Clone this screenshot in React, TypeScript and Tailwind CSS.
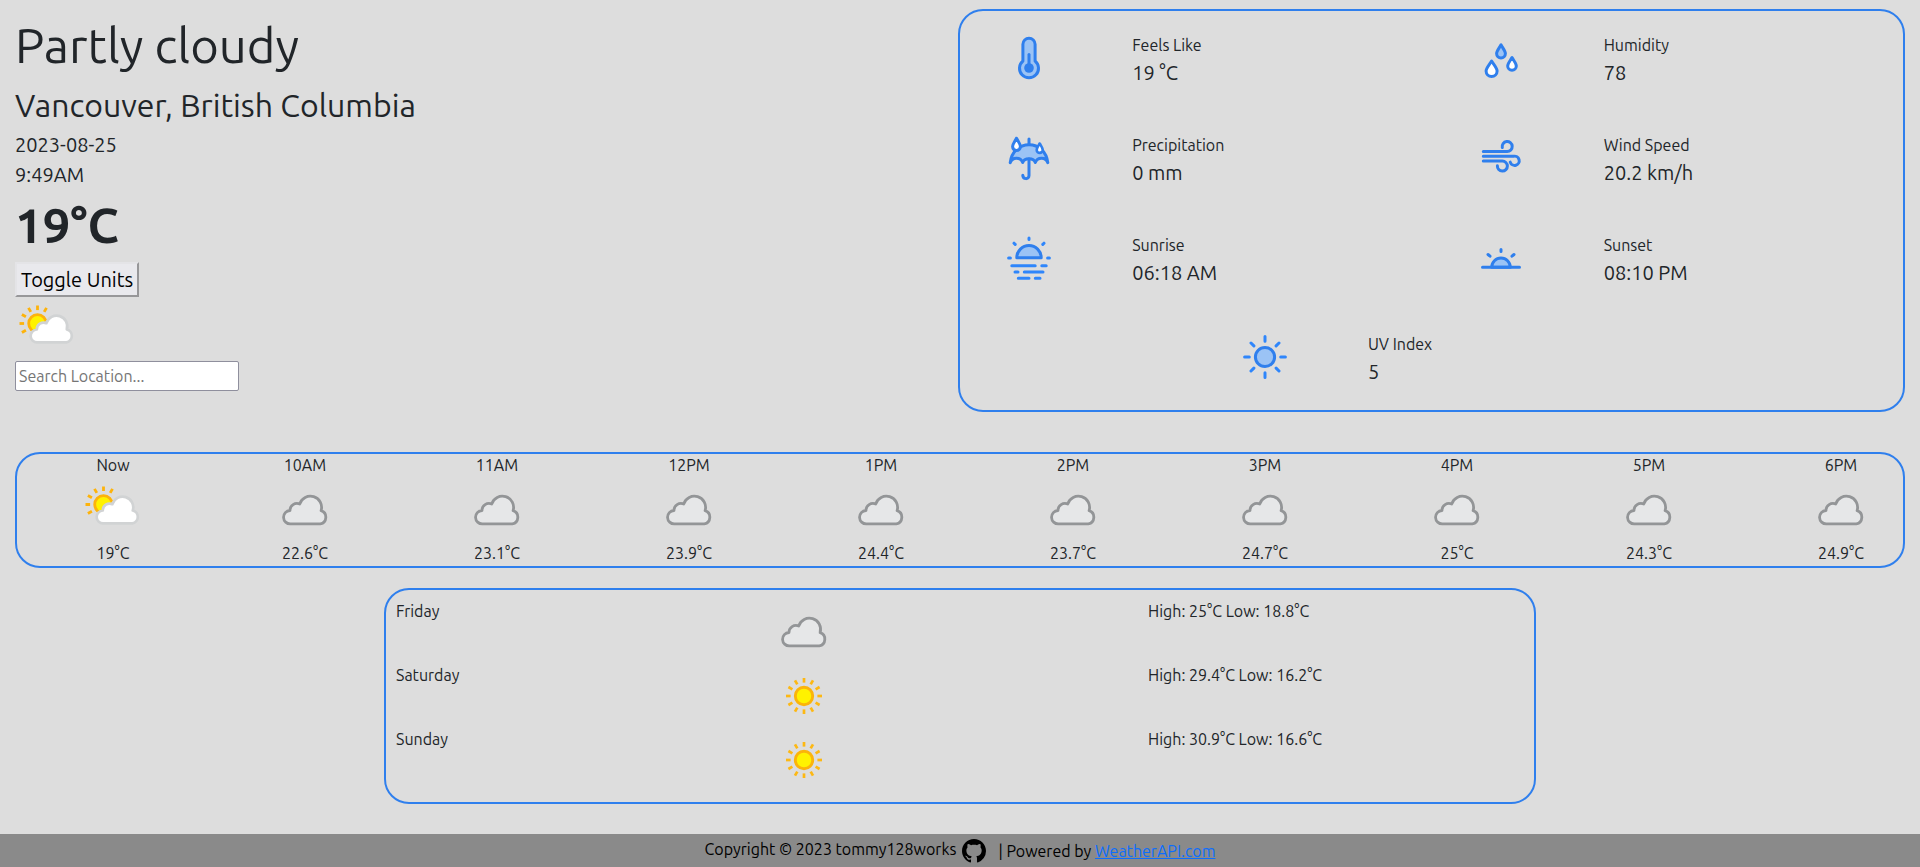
import type { ReactNode } from "react";

const BLUE = "#2f7fed";
const PALE = "#9bc3f5";

function MetricSvg({ children }: { children: ReactNode }) {
  return (
    <svg
      viewBox="0 0 48 48"
      className="size-12"
      fill="none"
      stroke={BLUE}
      strokeWidth="3"
      strokeLinecap="round"
      strokeLinejoin="round"
      aria-hidden="true"
    >
      {children}
    </svg>
  );
}

const Thermometer = () => (
  <MetricSvg>
    <path d="M17.9 10.3a6.1 6.1 0 0 1 12.2 0V27A9.5 9.5 0 1 1 17.9 27Z" fill={PALE} />
    <circle cx="24" cy="34" r="4.8" fill={BLUE} stroke="none" />
    <path d="M24 20.5V34" />
  </MetricSvg>
);

const Umbrella = () => (
  <MetricSvg>
    <path
      d="M24 10.7C14 10.7 6.5 18 5.2 28.7C7.2 22.8 15.5 22.8 17.7 28.5C19.2 23.5 28.8 23.5 30.3 28.5C32.5 22.8 40.8 22.8 42.8 28.7C41.5 18 34 10.7 24 10.7Z"
      fill={PALE}
    />
    <path d="M24 5V10M24 25V41.5C24 45.7 17.8 45.7 17.8 41.3" />
    <path d="M11.5 4.2C9.5 8 7.6 10 7.6 12.6a3.9 3.9 0 0 0 7.8 0C15.4 10 13.5 8 11.5 4.2Z" fill="#fff" />
    <path d="M34.7 9.5C33.2 12.2 31.7 14 31.7 15.9a3 3 0 0 0 6 0C37.7 14 36.2 12.2 34.7 9.5Z" fill="#fff" strokeWidth="2.6" />
  </MetricSvg>
);

const Sunrise = () => (
  <MetricSvg>
    <path d="M11.8 23.7a12.2 12.2 0 0 1 24.4 0Z" fill={PALE} />
    <path
      d="M24 4V5.5M9 9.2L10.2 10.4M39 9.2L37.8 10.4M3.6 24H5.4M42.6 24H44.4M6.8 31.7H30.2M36.8 31.7H41.2M10 38H13M19.3 38H38M13.3 44.3H24M30.3 44.3H35"
      stroke="#2f86fb"
    />
  </MetricSvg>
);

const Drops = () => (
  <MetricSvg>
    <path d="M24 10.8C22 14.3 19.6 17 19.6 19.6a4.4 4.4 0 0 0 8.8 0C28.4 17 26 14.3 24 10.8Z" fill={PALE} />
    <path d="M14.6 27C12.2 30.8 9.1 34 9.1 37a5.5 5.5 0 0 0 11 0C20.1 34 17 30.8 14.6 27Z" fill="#fff" />
    <path d="M35 23.6C33 27 30.7 29.5 30.7 32a4.3 4.3 0 0 0 8.6 0C39.3 29.5 37 27 35 23.6Z" fill="#fff" />
  </MetricSvg>
);

const Wind = () => (
  <MetricSvg>
    <path d="M6.3 17.5H30.2A5 5 0 1 0 25.3 13.5" />
    <path d="M6.3 22.3H36.5A4.6 4.6 0 1 1 33.2 28.1" />
    <path d="M6.3 27.1H25.2A5 5 0 1 1 20.4 31.8" />
  </MetricSvg>
);

const Sunset = () => (
  <MetricSvg>
    <path d="M14.7 33.3a9.3 9.3 0 0 1 18.6 0Z" fill={PALE} />
    <path d="M5.5 33.3H42.5M24 15.5V17.5M11 20.5L13 22.2M37 20.5L35 22.2" />
  </MetricSvg>
);

const UvSun = () => (
  <MetricSvg>
    <circle cx="24" cy="24" r="9.6" fill={PALE} />
    <path
      d="M24 3.6V8.3M24 39.7V44.4M3.6 24H8.3M39.7 24H44.4M10 10L12.9 12.9M38 10L35.1 12.9M10 38L12.9 35.1M38 38L35.1 35.1"
      stroke="#2f86fb"
    />
  </MetricSvg>
);

type Sky = "partly" | "cloudy" | "sunny";

const skyLabels: Record<Sky, string> = {
  partly: "Partly cloudy",
  cloudy: "Cloudy",
  sunny: "Sunny",
};

function rays(cx: number, cy: number, angles: number[]) {
  return angles.map((angle) => (
    <path key={angle} d="M0 -13.4V-18" transform={`translate(${cx} ${cy}) rotate(${angle})`} />
  ));
}

function SkyIcon({ sky }: { sky: Sky }) {
  return (
    <svg viewBox="0 0 64 64" className="block size-16" fill="none" role="img" aria-label={skyLabels[sky]}>
      {sky === "cloudy" && (
        <path
          d="M17.5 45.9A6.7 6.7 0 0 1 17 32.5A7 7 0 0 1 26.7 26A10.9 10.9 0 0 1 48.1 32.6A6.9 6.9 0 0 1 47.3 45.9Z"
          fill="#e6e7e8"
          stroke="#939597"
          strokeWidth="2.8"
          strokeLinejoin="round"
        />
      )}
      {sky === "sunny" && (
        <g stroke="#fdb813" strokeWidth="2.7">
          <circle cx="32" cy="32" r="8.7" fill="#fff200" stroke="#fbb40a" strokeWidth="2.9" />
          {rays(32, 32, [0, 30, 60, 90, 120, 150, 180, 210, 240, 270, 300, 330])}
        </g>
      )}
      {sky === "partly" && (
        <>
          <g stroke="#fdb30c" strokeWidth="2.8">
            <circle cx="22.5" cy="26.5" r="8.8" fill="#fff200" />
            {rays(22.5, 26.5, [240, 270, 300, 330, 0, 30])}
          </g>
          <path
            d="M22.4 45.4A6.4 6.4 0 0 1 21.8 32.5A6.8 6.8 0 0 1 31.4 26.2A10.5 10.5 0 0 1 51.8 32.5A6.6 6.6 0 0 1 51.4 45.4Z"
            fill="#fff"
            stroke="#d1d3d4"
            strokeWidth="2.7"
            strokeLinejoin="round"
          />
        </>
      )}
    </svg>
  );
}

function Metric({ icon, label, value }: { icon: ReactNode; label: string; value: string }) {
  return (
    <div className="grid w-1/2 grid-cols-3 pt-[23px] pb-4">
      <div className="pl-[45px]">{icon}</div>
      <div className="col-span-2 px-[15px]">
        <h2 className="text-base leading-[22px]">{label}</h2>
        <p className="text-xl leading-[34px]">{value}</p>
      </div>
    </div>
  );
}

const hours: { time: string; sky: Sky; temp: string }[] = [
  { time: "Now", sky: "partly", temp: "19°C" },
  { time: "10AM", sky: "cloudy", temp: "22.6°C" },
  { time: "11AM", sky: "cloudy", temp: "23.1°C" },
  { time: "12PM", sky: "cloudy", temp: "23.9°C" },
  { time: "1PM", sky: "cloudy", temp: "24.4°C" },
  { time: "2PM", sky: "cloudy", temp: "23.7°C" },
  { time: "3PM", sky: "cloudy", temp: "24.7°C" },
  { time: "4PM", sky: "cloudy", temp: "25°C" },
  { time: "5PM", sky: "cloudy", temp: "24.3°C" },
  { time: "6PM", sky: "cloudy", temp: "24.9°C" },
];

const days: { day: string; sky: Sky; range: string }[] = [
  { day: "Friday", sky: "cloudy", range: "High: 25°C Low: 18.8°C" },
  { day: "Saturday", sky: "sunny", range: "High: 29.4°C Low: 16.2°C" },
  { day: "Sunday", sky: "sunny", range: "High: 30.9°C Low: 16.6°C" },
];

export default function App() {
  return (
    <div className="flex min-h-screen flex-col bg-[#dddddd] font-['Ubuntu','Noto_Sans',sans-serif] text-base text-[#212529]">
      <main className="flex grow flex-col px-[15px]">
        <div className="flex items-start pt-[9px]">
          <section className="flex flex-1 flex-col items-start pt-[7px]">
            <h1 className="text-[49px] leading-[58px]">Partly cloudy</h1>
            <h2 className="mt-3 text-[32px] leading-[38px]">Vancouver, British Columbia</h2>
            <p className="mt-[6px] text-xl leading-[30px]">2023-08-25</p>
            <p className="text-xl leading-[30px]">9:49AM</p>
            <p className="mt-[3px] mb-[5px] text-[49px] leading-[64px] font-bold">19°C</p>
            <button
              type="button"
              className="border-2 border-t-[#e4e4e7] border-r-[#979799] border-b-[#979799] border-l-[#e4e4e7] bg-[#e9e9ed] px-1 text-xl leading-[31px] text-black"
            >
              Toggle Units
            </button>
            <SkyIcon sky="partly" />
            <input
              type="text"
              aria-label="Search Location"
              placeholder="Search Location..."
              className="w-[224px] rounded-[2px] border border-[#8f8f9d] bg-white px-[3px] py-[2px] leading-6 placeholder:text-[#757575]"
            />
          </section>
          <section className="flex min-h-[403px] w-[calc(50%+2px)] flex-wrap justify-center rounded-[25px] border-2 border-[#2f7fed]">
            <Metric icon={<Thermometer />} label="Feels Like" value="19 °C" />
            <Metric icon={<Drops />} label="Humidity" value="78" />
            <Metric icon={<Umbrella />} label="Precipitation" value="0 mm" />
            <Metric icon={<Wind />} label="Wind Speed" value="20.2 km/h" />
            <Metric icon={<Sunrise />} label="Sunrise" value="06:18 AM" />
            <Metric icon={<Sunset />} label="Sunset" value="08:10 PM" />
            <Metric icon={<UvSun />} label="UV Index" value="5" />
          </section>
        </div>

        <section className="mt-10 flex overflow-hidden rounded-[25px] border-2 border-[#2f7fed]">
          {hours.map((hour) => (
            <div key={hour.time} className="flex w-[10vw] shrink-0 flex-col items-center">
              <p className="pb-[2px] leading-[22px]">{hour.time}</p>
              <SkyIcon sky={hour.sky} />
              <p className="pb-[2px] leading-[22px]">{hour.temp}</p>
            </div>
          ))}
        </section>

        <section className="mx-auto mt-5 w-[60vw] rounded-[25px] border-2 border-[#2f7fed] p-[10px]">
          {days.map((day) => (
            <div key={day.day} className="grid grid-cols-3 leading-[22px]">
              <p>{day.day}</p>
              <SkyIcon sky={day.sky} />
              <p>{day.range}</p>
            </div>
          ))}
        </section>
      </main>

      <footer className="flex items-start justify-center bg-[#8a8a8a] pt-[3px] pb-1 leading-6 text-black">
        <p>Copyright © 2023 tommy128works</p>
        <a href="https://github.com/tommy128works" aria-label="GitHub" className="mt-[2px] mr-3 ml-[6px]">
          <svg viewBox="0 0 16 16" className="block size-6" fill="currentColor" aria-hidden="true">
            <path d="M8 0C3.58 0 0 3.58 0 8c0 3.54 2.29 6.53 5.47 7.59.4.07.55-.17.55-.38 0-.19-.01-.82-.01-1.49-2.01.37-2.53-.49-2.69-.94-.09-.23-.48-.94-.82-1.13-.28-.15-.68-.52-.01-.53.63-.01 1.08.58 1.23.82.72 1.21 1.87.87 2.33.66.07-.52.28-.87.51-1.07-1.78-.2-3.64-.89-3.64-3.95 0-.87.31-1.59.82-2.15-.08-.2-.36-1.02.08-2.12 0 0 .67-.21 2.2.82.64-.18 1.32-.27 2-.27s1.36.09 2 .27c1.53-1.04 2.2-.82 2.2-.82.44 1.1.16 1.92.08 2.12.51.56.82 1.27.82 2.15 0 3.07-1.87 3.75-3.65 3.95.29.25.54.73.54 1.48 0 1.07-.01 1.93-.01 2.2 0 .21.15.46.55.38A8.01 8.01 0 0 0 16 8c0-4.42-3.58-8-8-8z" />
          </svg>
        </a>
        <p className="pt-[2px]">
          | Powered by{" "}
          <a href="https://www.weatherapi.com/" className="text-[#0d6efd] underline">
            WeatherAPI.com
          </a>
        </p>
      </footer>
    </div>
  );
}
